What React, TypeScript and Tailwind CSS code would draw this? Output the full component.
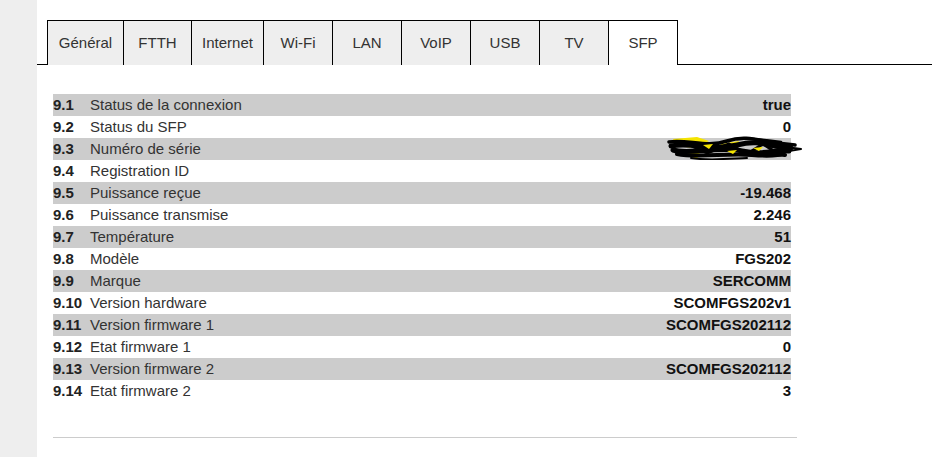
import React from "react";

const tabs: { label: string; w: string; active?: boolean }[] = [
  { label: "Général", w: "w-[76px]" },
  { label: "FTTH", w: "w-[68px]" },
  { label: "Internet", w: "w-[72px]" },
  { label: "Wi-Fi", w: "w-[69px]" },
  { label: "LAN", w: "w-[69px]" },
  { label: "VoIP", w: "w-[69px]" },
  { label: "USB", w: "w-[69px]" },
  { label: "TV", w: "w-[69px]" },
  { label: "SFP", w: "w-[70px]", active: true },
];

const rows: [string, string, string][] = [
  ["9.1", "Status de la connexion", "true"],
  ["9.2", "Status du SFP", "0"],
  ["9.3", "Numéro de série", ""],
  ["9.4", "Registration ID", ""],
  ["9.5", "Puissance reçue", "-19.468"],
  ["9.6", "Puissance transmise", "2.246"],
  ["9.7", "Température", "51"],
  ["9.8", "Modèle", "FGS202"],
  ["9.9", "Marque", "SERCOMM"],
  ["9.10", "Version hardware", "SCOMFGS202v1"],
  ["9.11", "Version firmware 1", "SCOMFGS202112"],
  ["9.12", "Etat firmware 1", "0"],
  ["9.13", "Version firmware 2", "SCOMFGS202112"],
  ["9.14", "Etat firmware 2", "3"],
];

function Scribble() {
  return (
    <svg
      className="absolute right-[-12px] top-[-2px]"
      width="136"
      height="27"
      viewBox="0 0 136 27"
    >
      <path d="M6 3 L30 1 L42 5 L28 12 L8 10 Z" fill="#f5e400" />
      <path d="M54 8 L72 5 L68 14 L52 13 Z" fill="#f5e400" />
      <path d="M18 18 L34 14 L30 23 Z" fill="#f5e400" />
      <g stroke="#000" strokeLinecap="round" strokeLinejoin="round" fill="none">
        <path d="M2 6 C20 3, 40 12, 60 5 S95 6, 110 7 L128 9" strokeWidth="3.5" />
        <path d="M4 10 C25 6, 45 15, 70 9 S100 11, 124 12" strokeWidth="5" />
        <path d="M6 14 C22 19, 50 10, 75 15 S105 13, 122 15" strokeWidth="5" />
        <path d="M10 18 C30 22, 60 17, 85 19 S110 18, 118 19" strokeWidth="4" />
        <path d="M16 6 L40 17 L62 8 L80 18 L96 8 L110 17" strokeWidth="3" />
        <path d="M24 22 C40 25, 60 23, 80 22" strokeWidth="2" />
        <path d="M70 3 C85 2, 100 4, 114 6" strokeWidth="2.5" />
        <path d="M112 10 L134 13 L116 16" strokeWidth="2" />
      </g>
      <path d="M36 9 L46 8 L42 13 Z" fill="#f5e400" />
      <path d="M86 12 L96 11 L92 15 Z" fill="#f5e400" />
      <path d="M60 15 L70 14 L66 18 Z" fill="#f5e400" />
    </svg>
  );
}

export default function App() {
  return (
    <div
      className="flex w-[932px] h-[457px] bg-white text-[15px] text-[#333]"
      style={{ fontFamily: '"Liberation Sans", Arial, sans-serif' }}
    >
      <div className="w-[37px] h-full bg-[#eeeeee] shrink-0" />
      <div className="flex-1 flex flex-col pt-[20px]">
        <div className="flex h-[45px]">
          <div className="w-[10px] border-b border-black" />
          {tabs.map((t, i) => (
            <div
              key={t.label}
              className={`${t.w} flex items-center justify-center border-t border-l border-black ${
                t.active ? "bg-white border-r" : "bg-[#eeeeee]"
              } ${i === tabs.length - 1 ? "border-r" : ""}`}
            >
              {t.label}
            </div>
          ))}
          <div className="flex-1 border-b border-black" />
        </div>
        <div className="ml-[16px] mt-[29px] w-[738px] flex flex-col">
          {rows.map(([n, label, value], i) => (
            <div
              key={n}
              className={`relative h-[22px] flex items-center ${
                i % 2 === 0 ? "bg-[#cccccc]" : "bg-white"
              }`}
            >
              <span className="w-[37px] font-bold text-[#222]">{n}</span>
              <span>{label}</span>
              <span className="ml-auto font-bold text-[#111]">{value}</span>
              {n === "9.3" && <Scribble />}
            </div>
          ))}
        </div>
        <div className="ml-[16px] mt-[35px] w-[744px] h-px bg-[#cccccc]" />
      </div>
    </div>
  );
}
